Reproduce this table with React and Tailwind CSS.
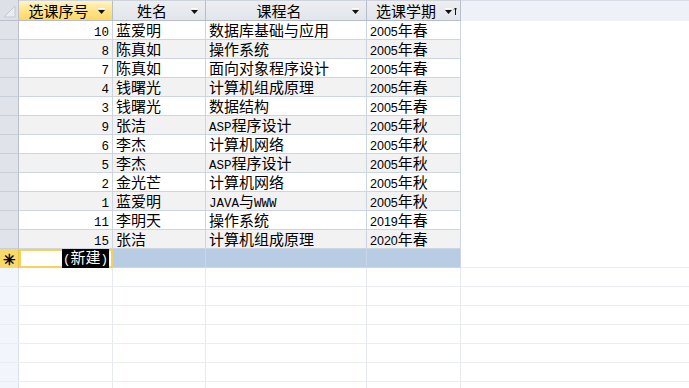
import React from 'react'

const records = [
  [10, '蓝爱明', '数据库基础与应用', '2005年春'],
  [8, '陈真如', '操作系统', '2005年春'],
  [7, '陈真如', '面向对象程序设计', '2005年春'],
  [4, '钱曙光', '计算机组成原理', '2005年春'],
  [3, '钱曙光', '数据结构', '2005年春'],
  [9, '张洁', 'ASP程序设计', '2005年秋'],
  [6, '李杰', '计算机网络', '2005年秋'],
  [5, '李杰', 'ASP程序设计', '2005年秋'],
  [2, '金光芒', '计算机网络', '2005年秋'],
  [1, '蓝爱明', 'JAVA与WWW', '2005年秋'],
  [11, '李明天', '操作系统', '2019年春'],
  [15, '张洁', '计算机组成原理', '2020年春'],
]

const columns = [
  { title: '选课序号', width: 'w-[94px]', active: true },
  { title: '姓名', width: 'w-[93px]' },
  { title: '课程名', width: 'w-[161px]' },
  { title: '选课学期', width: 'w-[94px]', sorted: true },
]

// half-width runs use a narrower face so they sit like the datasheet's latin glyphs
function Mixed({ text, sans }) {
  return String(text)
    .split(/([\x20-\x7e]+)/)
    .filter(Boolean)
    .map((part, i) =>
      /^[\x20-\x7e]+$/.test(part) ? (
        <span
          key={i}
          className={
            sans
              ? "font-['Liberation_Sans'] text-[12.5px]"
              : "font-['Liberation_Mono'] text-[12.5px]"
          }
        >
          {part}
        </span>
      ) : (
        <span key={i}>{part}</span>
      )
    )
}

function DropArrow({ sorted }) {
  return (
    <svg width={sorted ? 12 : 8} height="8" viewBox={sorted ? '0 0 12 8' : '0 0 8 8'} className="shrink-0">
      <line x1="0" y1="1.5" x2="7" y2="1.5" stroke="#ffffff" strokeWidth="1" />
      <polygon points="0,3 7,3 3.5,7" fill="#111" />
      {sorted && (
        <>
          <line x1="10.5" y1="1" x2="10.5" y2="8" stroke="#111" strokeWidth="1" />
          <polyline points="9,2.5 10.5,1 12,2.5" fill="none" stroke="#111" strokeWidth="1" />
        </>
      )}
    </svg>
  )
}

function HeaderRow() {
  return (
    <div className="flex h-[21px]">
      <div className="w-[19px] h-full bg-[#dde1e7] border-r border-b border-[#b9c0cb] flex items-end justify-end">
        <svg width="14" height="14" viewBox="0 0 14 14" className="mb-[2px] mr-[2px]">
          <polygon points="2,13 13,2 13,13" fill="#e9ecf0" stroke="#c4c9d1" strokeWidth="1" />
        </svg>
      </div>
      {columns.map((col) => (
        <div
          key={col.title}
          className={`${col.width} h-full flex items-center border-r border-b border-t border-t-[#cfd4dc] border-[#b6bdc8] ${
            col.active
              ? 'bg-gradient-to-b from-[#fff4c4] via-[#ffe48a] to-[#ffd860]'
              : 'bg-gradient-to-b from-[#eceef2] to-[#e2e5ea]'
          } ${col.sorted ? 'pr-[3px]' : 'pr-[6px]'}`}
        >
          <span className="flex-1 text-center">{col.title}</span>
          <DropArrow sorted={col.sorted} />
        </div>
      ))}
      <div className="flex-1 h-full bg-[#eef1f8] border-t border-[#d7dce6]" />
    </div>
  )
}

function DataRow({ row, index }) {
  const shade = index % 2 === 1 ? 'bg-[#f2f2f2]' : 'bg-white'
  const [id, name, course, term] = row
  return (
    <div className="flex h-[19px]">
      <div className="w-[19px] h-full bg-[#e0e4ea] border-r border-b border-r-[#b9c0cb] border-b-[#c9cfd9]" />
      <div className={`w-[94px] h-full ${shade} border-r border-b border-[#cdd5e3] text-right pr-[3px]`}>
        <Mixed text={id} />
      </div>
      <div className={`w-[93px] h-full ${shade} border-r border-b border-[#cdd5e3] pl-[3px]`}>
        <Mixed text={name} />
      </div>
      <div className={`w-[161px] h-full ${shade} border-r border-b border-[#cdd5e3] pl-[3px]`}>
        <Mixed text={course} />
      </div>
      <div className={`w-[94px] h-full ${shade} border-r border-b border-[#cdd5e3] pl-[3px]`}>
        <Mixed text={term} sans />
      </div>
      <div className="flex-1 h-full bg-white" />
    </div>
  )
}

function NewRow() {
  return (
    <div className="flex h-[19px]">
      <div className="w-[19px] h-full bg-[#f9d968] border-r border-[#e9c24a] flex items-center justify-center">
        <span className="text-[15px] leading-none font-bold">✳</span>
      </div>
      <div className="w-[94px] h-full bg-white border-2 border-[#f6d25a] flex items-center justify-end pr-[2px]">
        <span className="bg-black text-white leading-[15px] px-[1px]">
          <Mixed text="(新建)" />
        </span>
      </div>
      <div className="w-[93px] h-full bg-[#b8cce4] border-r border-b border-[#c9d6ea]" />
      <div className="w-[161px] h-full bg-[#b8cce4] border-r border-b border-[#c9d6ea]" />
      <div className="w-[94px] h-full bg-[#b8cce4] border-r border-b border-[#c9d6ea]" />
      <div className="flex-1 h-full bg-white border-b border-[#ebedf2]" />
    </div>
  )
}

function EmptyRow() {
  return (
    <div className="flex h-[19px] border-b border-[#ebedf2]">
      <div className="w-[19px] h-full bg-[#f3f5fd] border-r border-[#dde1ec]" />
      <div className="w-[94px] h-full border-r border-[#e6e9f0]" />
      <div className="w-[93px] h-full border-r border-[#e6e9f0]" />
      <div className="w-[161px] h-full border-r border-[#e6e9f0]" />
      <div className="w-[94px] h-full border-r border-[#e6e9f0]" />
      <div className="flex-1 h-full" />
    </div>
  )
}

export default function App() {
  return (
    <div className="w-[689px] h-[388px] overflow-hidden bg-white text-black text-[15px] leading-[18px] font-['Noto_Sans_CJK_SC',sans-serif]">
      <HeaderRow />
      {records.map((row, i) => (
        <DataRow key={row[0]} row={row} index={i} />
      ))}
      <NewRow />
      {Array.from({ length: 7 }).map((_, i) => (
        <EmptyRow key={i} />
      ))}
    </div>
  )
}
